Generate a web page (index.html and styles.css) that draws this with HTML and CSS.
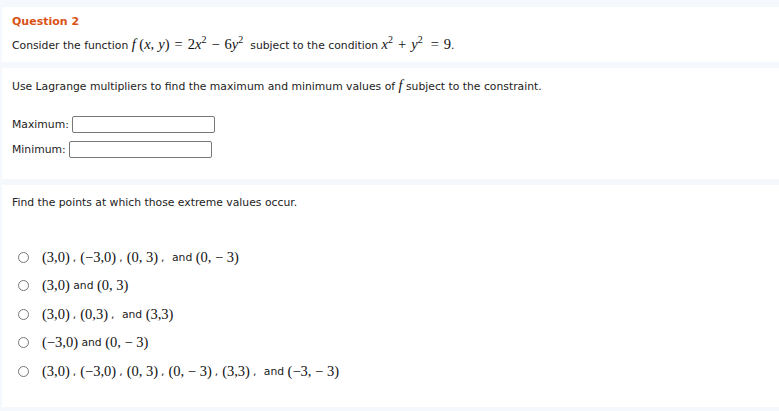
FILE: index.html
```html
<!DOCTYPE html>
<html>
<head>
<meta charset="utf-8">
<link rel="stylesheet" href="styles.css">
</head>
<body>
<div class="page">
  <section class="card card-q">
    <div class="q-title">Question 2</div>
    <div class="q-text">Consider the function <span class="m"><i>f</i> (<i>x</i>,<span class="sp"></span><i>y</i>)<span class="op">=</span>2<i>x</i><sup>2</sup><span class="op">−</span>6<i>y</i><sup>2</sup></span><span class="gap"></span>subject to the condition <span class="m"><i>x</i><sup>2</sup><span class="op">+</span><i>y</i><sup>2</sup><span class="op op-wide">=</span>9</span>.</div>
  </section>
  <section class="card card-a">
    <div class="a-text">Use Lagrange multipliers to find the maximum and minimum values of <span class="m"><i>f</i></span> subject to the constraint.</div>
    <div class="field field-max"><span class="lbl">Maximum:</span><span class="box"></span></div>
    <div class="field field-min"><span class="lbl">Minimum:</span><span class="box"></span></div>
  </section>
  <section class="card card-b">
    <div class="b-text">Find the points at which those extreme values occur.</div>
    <ul class="opts">
      <li><span class="radio"></span><span class="m">(3,0)</span><span class="c">,</span><span class="m">(−3,0)</span><span class="c">,</span><span class="m">(0, 3)</span><span class="c">,</span> and <span class="m">(0, − 3)</span></li>
      <li><span class="radio"></span><span class="m">(3,0)</span> and <span class="m">(0, 3)</span></li>
      <li><span class="radio"></span><span class="m">(3,0)</span><span class="c">,</span><span class="m">(0,3)</span><span class="c">,</span> and <span class="m">(3,3)</span></li>
      <li><span class="radio"></span><span class="m">(−3,0)</span> and <span class="m">(0, − 3)</span></li>
      <li><span class="radio"></span><span class="m">(3,0)</span><span class="c">,</span><span class="m">(−3,0)</span><span class="c">,</span><span class="m">(0, 3)</span><span class="c">,</span><span class="m">(0, − 3)</span><span class="c">,</span><span class="m">(3,3)</span><span class="c">,</span> and <span class="m">(−3, − 3)</span></li>
    </ul>
  </section>
</div>
</body>
</html>
```
FILE: styles.css
```css
html, body {
  margin: 0;
  padding: 0;
  background: #f5f8fd;
}
body {
  font-family: "DejaVu Sans", Verdana, sans-serif;
  font-size: 10.8px;
  color: #222;
}
.page {
  display: flex;
  flex-direction: column;
  gap: 6px;
  padding: 7px 0 0 2px;
}
.card {
  background: #fff;
  padding-left: 10px;
}
.card-q {
  height: 55px;
  padding-top: 8px;
  box-sizing: border-box;
}
.q-title {
  color: #da5316;
  font-weight: bold;
  font-size: 11px;
  line-height: 14px;
}
.q-text {
  margin-top: 7px;
  line-height: 16px;
}
.m {
  font-family: "Liberation Serif", "Times New Roman", serif;
  font-size: 14.5px;
  color: #111;
}
.m sup {
  font-size: 10px;
  vertical-align: 6px;
  line-height: 0;
}
.op {
  display: inline-block;
  margin: 0 5px;
}
.op-wide {
  margin-left: 8px;
}
.sp {
  display: inline-block;
  width: 4px;
}
.gap {
  display: inline-block;
  width: 7px;
}
.card-a {
  height: 111px;
  box-sizing: border-box;
  padding-top: 10px;
}
.a-text {
  line-height: 14px;
}
.field {
  display: flex;
  align-items: center;
  gap: 3px;
  height: 18px;
}
.field-max {
  margin-top: 21px;
}
.field-min {
  margin-top: 7px;
}
.box {
  display: block;
  width: 141px;
  height: 15px;
  border: 1.5px solid #777;
  border-radius: 2px;
}
.card-b {
  height: 222px;
  box-sizing: border-box;
  padding-top: 11px;
}
.b-text {
  line-height: 14px;
}
.opts {
  list-style: none;
  margin: 38px 0 0 0;
  padding: 0 0 0 6px;
  display: flex;
  flex-direction: column;
  gap: 10px;
}
.opts li {
  display: flex;
  align-items: center;
  height: 18.5px;
  white-space: pre;
}
.radio {
  display: inline-block;
  width: 11px;
  height: 11px;
  border: 1px solid #777;
  border-radius: 50%;
  margin-right: 13px;
  box-sizing: border-box;
}
.c {
  margin: 0 4px 0 3px;
}
```
